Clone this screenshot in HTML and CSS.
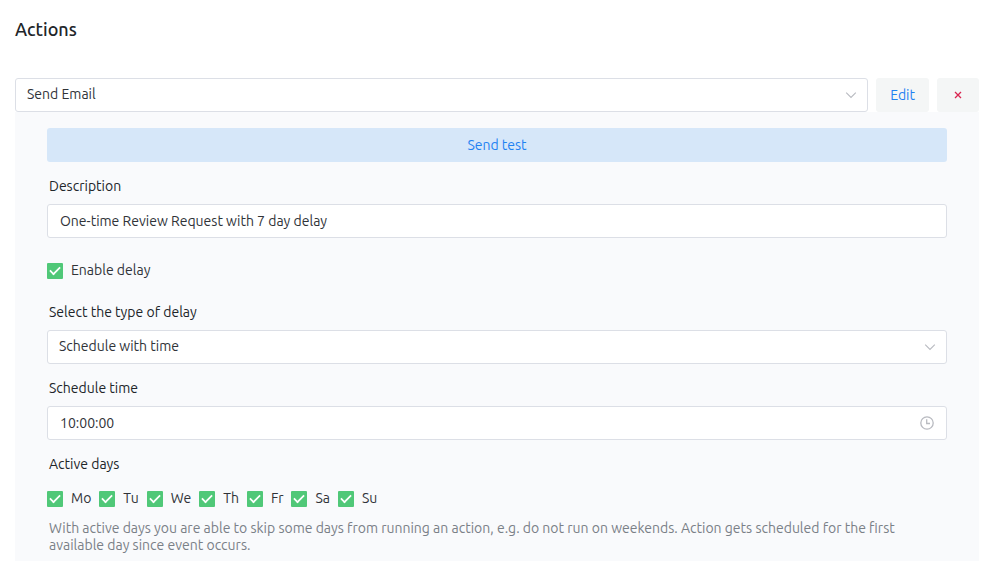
FILE: index.html
```html
<!DOCTYPE html>
<html lang="en">
<head>
<meta charset="utf-8">
<meta name="viewport" content="width=device-width, initial-scale=1">
<title>Actions</title>
<link rel="stylesheet" href="styles.css">
</head>
<body>
<main class="page">
  <h1 class="title">Actions</h1>
  <div class="action-bar">
    <div class="control">
      <select class="box select" aria-label="Action"><option>Send Email</option></select>
      <svg class="icon" viewBox="0 0 14 14" aria-hidden="true"><path d="M2.2 4.7 7 9.5l4.8-4.8"/></svg>
    </div>
    <button class="button" type="button">Edit</button>
    <button class="button remove" type="button" aria-label="Remove"><svg viewBox="0 0 8 8" aria-hidden="true"><path d="m1 1 6 6M7 1 1 7"/></svg></button>
  </div>
  <section class="panel">
    <button class="button test" type="button">Send test</button>

    <label class="label" for="description">Description</label>
    <input class="box" id="description" type="text" value="One-time Review Request with 7 day delay">

    <div class="toggle">
      <label class="check"><input type="checkbox" checked>Enable delay</label>
    </div>

    <label class="label" for="delay">Select the type of delay</label>
    <div class="control">
      <select class="box select" id="delay"><option>Schedule with time</option></select>
      <svg class="icon" viewBox="0 0 14 14" aria-hidden="true"><path d="M2.2 4.7 7 9.5l4.8-4.8"/></svg>
    </div>

    <label class="label" for="time">Schedule time</label>
    <div class="control">
      <input class="box" id="time" type="text" value="10:00:00">
      <svg class="icon clock" viewBox="0 0 14 14" aria-hidden="true"><circle cx="7" cy="7" r="6.2"/><path d="M6.7 3.2v4.3h3.3"/></svg>
    </div>

    <fieldset class="days">
      <legend class="label">Active days</legend>
      <div class="day-list">
        <label class="check"><input type="checkbox" checked>Mo</label>
        <label class="check"><input type="checkbox" checked>Tu</label>
        <label class="check"><input type="checkbox" checked>We</label>
        <label class="check"><input type="checkbox" checked>Th</label>
        <label class="check"><input type="checkbox" checked>Fr</label>
        <label class="check"><input type="checkbox" checked>Sa</label>
        <label class="check"><input type="checkbox" checked>Su</label>
      </div>
    </fieldset>
    <p class="help">With active days you are able to skip some days from running an action, e.g. do not run on weekends. Action gets scheduled for the first available day since event occurs.</p>
  </section>
</main>
</body>
</html>
```
FILE: styles.css
```css
* {
  box-sizing: border-box;
}

body {
  margin: 0;
  background: #fff;
  color: #212529;
  font: 14px/17px Ubuntu, "Noto Sans", sans-serif;
}

.page {
  display: flex;
  flex-direction: column;
  min-height: 100vh;
  padding: 17px 18px 0 15px;
}

.title {
  margin: 0 0 37px;
  font-size: 18px;
  font-weight: 500;
  line-height: 24px;
}

.action-bar {
  display: flex;
  gap: 8px;
}

.control {
  position: relative;
  flex: 1;
}

.box {
  display: block;
  width: 100%;
  height: 34px;
  padding: 0 36px 0 12px;
  border: 1px solid #dcdfe6;
  border-radius: 3px;
  background: #fff;
  color: #303338;
  font: inherit;
}

.select {
  appearance: none;
  padding: 0 36px 2px 11px;
}

.icon {
  position: absolute;
  top: 10px;
  right: 10px;
  width: 14px;
  height: 14px;
  fill: none;
  stroke: #b8bac0;
  stroke-width: 1.1;
  pointer-events: none;
}

.clock {
  right: 13px;
  stroke-width: 1.3;
}

.button {
  height: 34px;
  padding: 0 14px;
  border: 0;
  border-radius: 3px;
  background: #f4f6f6;
  color: #1f82f2;
  font: inherit;
}

.remove {
  display: grid;
  place-items: center;
  padding: 0 17px;
}

.remove svg {
  width: 8px;
  height: 8px;
  stroke: #d92550;
  stroke-width: 1.3;
}

.panel {
  flex: 1;
  padding: 16px 32px 7px;
  background: #f9fafc;
}

.test {
  display: block;
  width: 100%;
  background: #d6e7f9;
}

.label {
  display: block;
  padding: 16px 2px 9px;
}

.toggle {
  padding: 24px 0 9px;
}

.check {
  display: flex;
  align-items: center;
  gap: 8px;
  color: #303338;
}

.check input {
  appearance: none;
  width: 16px;
  height: 16px;
  margin: 0;
  border-radius: 1px;
  background: #50c878;
  display: grid;
  place-items: center;
}

.check input:checked::before {
  content: "";
  width: 10px;
  height: 5px;
  margin-bottom: 2px;
  border: solid #fff;
  border-width: 0 0 2px 2px;
  transform: rotate(-45deg) scale(0.85);
}

.days {
  margin: 0;
  padding: 0;
  border: 0;
}

.day-list {
  display: flex;
  flex-wrap: wrap;
  gap: 8px;
  padding: 8px 0 13px;
}

.help {
  margin: 0;
  padding: 0 2px;
  color: #7a8087;
}
```
